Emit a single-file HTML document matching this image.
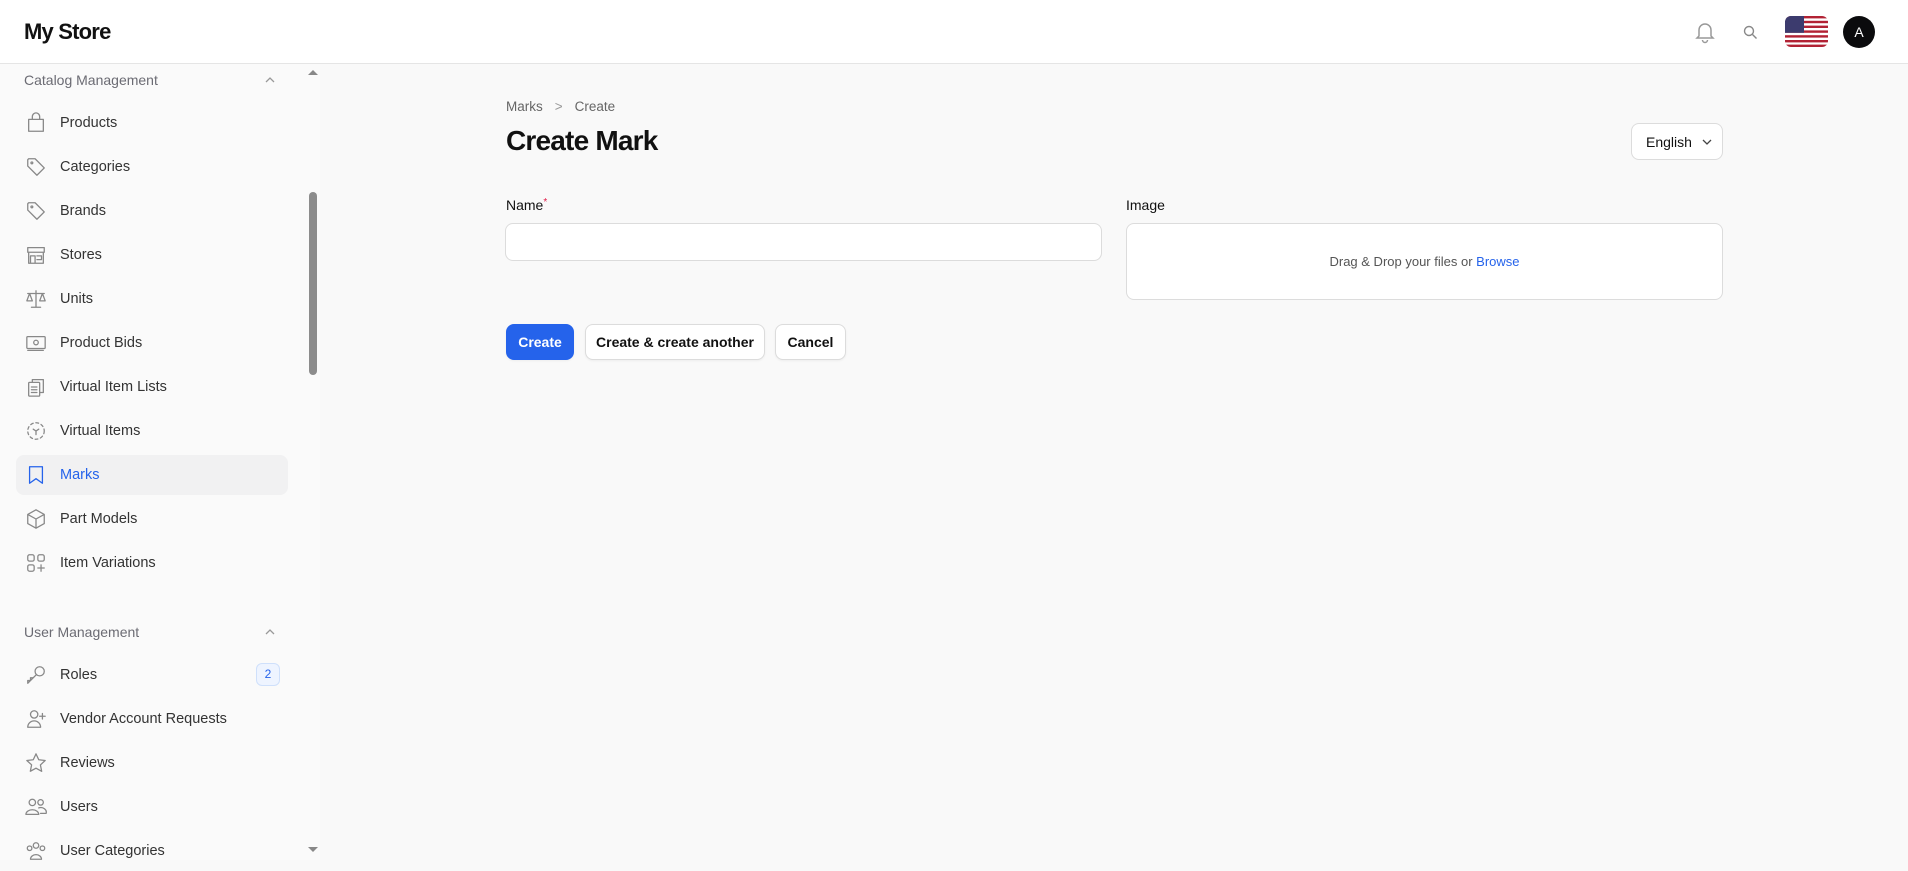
<!DOCTYPE html>
<html><head><meta charset="utf-8"><style>
*{box-sizing:border-box;margin:0;padding:0}
body{width:1908px;height:860px;overflow:hidden;background:#f9f9f9;font-family:"Liberation Sans",sans-serif;color:#111;position:relative}
.hdr{position:absolute;left:0;top:0;width:1908px;height:64px;background:#fff;border-bottom:1px solid #e5e5e5}
.logo{position:absolute;left:24px;top:19px;font-size:22px;font-weight:bold;letter-spacing:-0.8px}
.side{position:absolute;left:0;top:64px;width:320px;height:796px;background:#fafafa}
.grp{position:absolute;left:24px;font-size:14px;color:#6b6b73}
.chev{position:absolute;left:264px;width:12px;height:12px}
.it{position:absolute;left:16px;width:272px;height:40px;display:flex;align-items:center;font-size:14.5px;color:#333}
.it svg{position:absolute;left:9px;top:9px;width:22px;height:22px;fill:none;stroke:#888;stroke-width:1.4;stroke-linecap:round;stroke-linejoin:round}
.it span{position:absolute;left:44px}
.act{background:#f1f1f2;border-radius:8px;color:#2563eb}
.act svg{stroke:#2563eb}
.badge{position:absolute;right:8px;top:8px;width:24px;height:23px;border:1px solid #cfe0fb;background:#eef4ff;border-radius:6px;color:#2563eb;font-size:12px;text-align:center;line-height:21px}
.sb{position:absolute;left:309px;top:128px;width:8px;height:183px;background:#8c8c8c;border-radius:4px}
.btn{position:absolute;top:324px;height:36px;border-radius:8px;font-size:14px;font-weight:bold;display:flex;align-items:center;justify-content:center;border:1px solid #dcdcdc;background:#fff;box-shadow:0 1px 2px rgba(0,0,0,.05)}
</style></head><body>
<div class="hdr">
<div class="logo">My Store</div>
<svg style="position:absolute;left:1694px;top:20px" width="22" height="24" viewBox="0 0 22 24" fill="none" stroke="#999" stroke-width="1.5"><path d="M5 16V10a6 6 0 0 1 12 0v6l2 2H3z"/><path d="M8.5 20a2.5 2.5 0 0 0 5 0"/></svg>
<svg style="position:absolute;left:1743px;top:25px" width="15" height="15" viewBox="0 0 15 15" fill="none" stroke="#888" stroke-width="1.4"><circle cx="6" cy="6" r="4.5"/><path d="M9.5 9.5l4 4"/></svg>
<svg style="position:absolute;left:1785px;top:16px;border-radius:6px" width="43" height="31" viewBox="0 0 43 31"><rect width="43" height="31" fill="#fff"/><g fill="#b22234"><rect y="0" width="43" height="2.4"/><rect y="4.8" width="43" height="2.4"/><rect y="9.6" width="43" height="2.4"/><rect y="14.4" width="43" height="2.4"/><rect y="19.2" width="43" height="2.4"/><rect y="24" width="43" height="2.4"/><rect y="28.6" width="43" height="2.4"/></g><rect width="19" height="16.8" fill="#3c3b6e"/></svg>
<div style="position:absolute;left:1843px;top:16px;width:32px;height:32px;border-radius:50%;background:#0b0b0d;color:#fff;font-size:14px;text-align:center;line-height:32px">A</div>
</div>
<div class="side">
<div class="grp" style="top:8px">Catalog Management</div>
<svg class="chev" style="top:10px" viewBox="0 0 12 12" fill="none" stroke="#999" stroke-width="1.3"><path d="M2 8l4-4 4 4"/></svg>
<div class="it" style="top:39px"><svg viewBox="0 0 24 24"><path d="M4 8h16v13H4z"/><path d="M8 8V5a4 4 0 0 1 8 0v3"/></svg><span>Products</span></div>
<div class="it" style="top:83px"><svg viewBox="0 0 24 24"><path d="M3 4v7l10 10 8-8L11 3H4z"/><circle cx="7.5" cy="7.5" r="1"/></svg><span>Categories</span></div>
<div class="it" style="top:127px"><svg viewBox="0 0 24 24"><path d="M3 4v7l10 10 8-8L11 3H4z"/><circle cx="7.5" cy="7.5" r="1"/></svg><span>Brands</span></div>
<div class="it" style="top:171px"><svg viewBox="0 0 24 24"><path d="M3 4h18v5H3zM4 9v12h16V9M6 21v-8h5v8M13 13h5v4h-5"/></svg><span>Stores</span></div>
<div class="it" style="top:215px"><svg viewBox="0 0 24 24"><path d="M12 3v18M7 21h10M3 6h18M5 6l-3 8h6zM19 6l-3 8h6z"/></svg><span>Units</span></div>
<div class="it" style="top:259px"><svg viewBox="0 0 24 24"><rect x="2" y="5" width="20" height="13" rx="1"/><circle cx="12" cy="11.5" r="2.5"/><path d="M3 20h17"/></svg><span>Product Bids</span></div>
<div class="it" style="top:303px"><svg viewBox="0 0 24 24"><rect x="4" y="7" width="12" height="15" rx="1"/><path d="M8 7V4h12v14h-4M7 12h6M7 15h6M7 18h6"/></svg><span>Virtual Item Lists</span></div>
<div class="it" style="top:347px"><svg viewBox="0 0 24 24" stroke-dasharray="3 3"><circle cx="12" cy="12" r="9"/><path d="M9 10l3 2 3-2M12 12v4" stroke-dasharray="none"/></svg><span>Virtual Items</span></div>
<div class="it act" style="top:391px"><svg viewBox="0 0 24 24"><path d="M5 3h14v18l-7-5-7 5z"/></svg><span>Marks</span></div>
<div class="it" style="top:435px"><svg viewBox="0 0 24 24"><path d="M12 2l9 5v10l-9 5-9-5V7zM3 7l9 5 9-5M12 12v10"/></svg><span>Part Models</span></div>
<div class="it" style="top:479px"><svg viewBox="0 0 24 24"><rect x="3" y="3" width="7" height="7" rx="2"/><rect x="14" y="3" width="7" height="7" rx="2"/><rect x="3" y="14" width="7" height="7" rx="2"/><path d="M17.5 14v7M14 17.5h7"/></svg><span>Item Variations</span></div>
<div class="grp" style="top:560px">User Management</div>
<svg class="chev" style="top:562px" viewBox="0 0 12 12" fill="none" stroke="#999" stroke-width="1.3"><path d="M2 8l4-4 4 4"/></svg>
<div class="it" style="top:591px"><svg viewBox="0 0 24 24"><circle cx="16" cy="8" r="5"/><path d="M12.5 11.5L3 21v-3h3v-3h3l2-2"/></svg><span>Roles</span><div class="badge">2</div></div>
<div class="it" style="top:635px"><svg viewBox="0 0 24 24"><circle cx="10" cy="7" r="4"/><path d="M3 21a7 7 0 0 1 14 0zM19 6v6M16 9h6"/></svg><span>Vendor Account Requests</span></div>
<div class="it" style="top:679px"><svg viewBox="0 0 24 24"><path d="M12 2l3 6.5 7 .8-5.2 4.8 1.4 7L12 17.6 5.8 21l1.4-7L2 9.3l7-.8z"/></svg><span>Reviews</span></div>
<div class="it" style="top:723px"><svg viewBox="0 0 24 24"><circle cx="8" cy="7" r="3.5"/><circle cx="17" cy="7" r="3"/><path d="M1 20a7 5 0 0 1 14 0zM15 13a6 5 0 0 1 8 6h-6"/></svg><span>Users</span></div>
<div class="it" style="top:767px"><svg viewBox="0 0 24 24"><circle cx="12" cy="6" r="3"/><circle cx="5" cy="9" r="2.5"/><circle cx="19" cy="9" r="2.5"/><path d="M6 21a6 5 0 0 1 12 0z"/></svg><span>User Categories</span></div>
<div class="sb"></div>
<div style="position:absolute;left:308px;top:6px;border:5px solid transparent;border-bottom:5px solid #888;border-top:0"></div>
<div style="position:absolute;left:308px;top:783px;border:5px solid transparent;border-top:5px solid #888;border-bottom:0"></div>
</div>
<div style="position:absolute;left:506px;top:99px;font-size:13.5px;color:#666">Marks<span style="margin:0 12px;color:#999">&gt;</span>Create</div>
<div style="position:absolute;left:506px;top:125px;font-size:28px;font-weight:bold;letter-spacing:-0.8px">Create Mark</div>
<div style="position:absolute;left:1631px;top:123px;width:92px;height:37px;background:#fff;border:1px solid #dcdcdc;border-radius:8px;font-size:14px;padding:10px 0 0 14px">English<svg style="position:absolute;left:70px;top:15px" width="10" height="7" viewBox="0 0 10 7" fill="none" stroke="#444" stroke-width="1.3"><path d="M1 1l4 4 4-4"/></svg></div>
<div style="position:absolute;left:506px;top:197px;font-size:14px">Name<span style="color:#e11d48;font-size:10px;vertical-align:top">*</span></div>
<div style="position:absolute;left:1126px;top:197px;font-size:14px">Image</div>
<div style="position:absolute;left:505px;top:223px;width:597px;height:38px;background:#fff;border:1px solid #dcdcdc;border-radius:8px"></div>
<div style="position:absolute;left:1126px;top:223px;width:597px;height:77px;background:#fff;border:1px solid #dcdcdc;border-radius:8px;font-size:13px;color:#555;text-align:center;line-height:75px">Drag &amp; Drop your files or <span style="color:#2563eb">Browse</span></div>
<div class="btn" style="left:506px;width:68px;background:#2563eb;border-color:#2563eb;color:#fff">Create</div>
<div class="btn" style="left:585px;width:180px">Create &amp; create another</div>
<div class="btn" style="left:775px;width:71px">Cancel</div>
</body></html>
